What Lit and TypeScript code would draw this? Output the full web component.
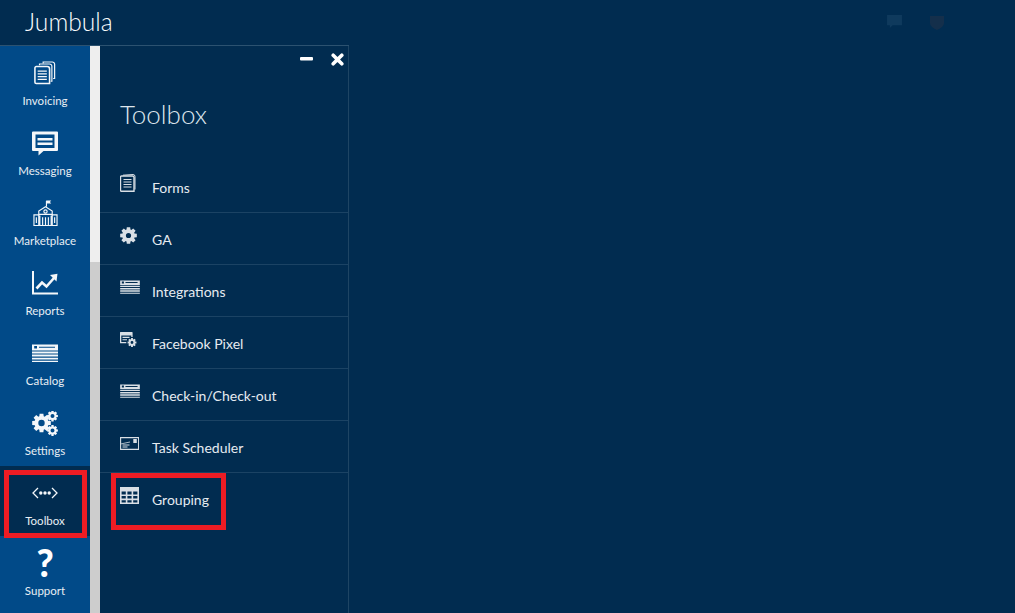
import { LitElement, html, css, svg } from "lit";
import { customElement } from "lit/decorators.js";

const gearPath = (cx: number, cy: number, r: number, hole: number) => {
  let d = "";
  const n = 8;
  for (let i = 0; i < n; i++) {
    const a = (i / n) * Math.PI * 2;
    const w = 0.2;
    const ro = r, ri = r * 0.74;
    const p = (ang: number, rad: number) => `${(cx + Math.cos(ang) * rad).toFixed(2)} ${(cy + Math.sin(ang) * rad).toFixed(2)}`;
    d += `${i === 0 ? "M" : "L"}${p(a - w - 0.12, ri)} L${p(a - w, ro)} L${p(a + w, ro)} L${p(a + w + 0.12, ri)} `;
  }
  d += `Z M${cx + hole} ${cy} A${hole} ${hole} 0 1 0 ${cx - hole} ${cy} A${hole} ${hole} 0 1 0 ${cx + hole} ${cy} Z`;
  return d;
};

const cardLines = svg`
  <path fill="currentColor" fill-rule="evenodd" d="M0 0.5h26v6H0zM2.2 2v2.6h2.8V2zM7 2.8v1h16v-1zM0 7.5h26v1.9H0zM0 10.6h26v1.9H0zM0 13.7h26v1.9H0zM0 16.7h26v1.5H0z"/>`;

const icons = {
  invoicing: svg`<svg viewBox="0 0 24 26" width="22" height="24" fill="none" stroke="currentColor">
    <path stroke-width="1.3" d="M10 2.5 V1 h10 a2.5 2.5 0 0 1 2.5 2.5 V19 h-1.6"/>
    <path stroke-width="1.3" d="M6 4.5 V3.2 h11 a2.5 2.5 0 0 1 2.5 2.5 V22 h-1.3"/>
    <path stroke-width="1.7" fill="#014a88" d="M2.5 6 h12 a2.5 2.5 0 0 1 2.5 2.5 V24.5 H2.5 a1.5 1.5 0 0 1-1.5-1.5 V7.5 a1.5 1.5 0 0 1 1.5-1.5z"/>
    <path stroke-width="1.5" d="M4 11h10M4 14h10M4 17h10M4 20h10"/></svg>`,
  messaging: svg`<svg viewBox="0 0 26 25" width="26" height="25">
    <path fill="currentColor" fill-rule="evenodd" d="M1 0.5h24a1 1 0 0 1 1 1V19a1 1 0 0 1-1 1H11.5l-5 4.6V20H1a1 1 0 0 1-1-1V1.5a1 1 0 0 1 1-1zM3.5 3.5V17h19V3.5zM5.5 7h15v2.6h-15zM5.5 11.5h15v2.6h-15z"/></svg>`,
  marketplace: svg`<svg viewBox="0 0 26 27" width="25" height="26" fill="none" stroke="currentColor" stroke-width="1.2">
    <path d="M14 7V0.8"/><path fill="currentColor" stroke="none" d="M14 0.6h5l-1.4 1.5L19 3.7h-5z"/>
    <path d="M13 7 L20 11.5 V15 H6 V11.5z"/><circle cx="13" cy="12" r="1.7"/>
    <path d="M1 15.5h5v11H1zM20 15.5h5v11h-5z"/><path stroke-width="1.4" d="M7 16v10.6h12V16"/>
    <path d="M3.5 18v6M22.5 18v6M10 18v8M13 18v8M16 18v8"/></svg>`,
  reports: svg`<svg viewBox="0 0 26 24" width="26" height="24" fill="none" stroke="currentColor">
    <path stroke-width="2" d="M1 0v22.5h25"/>
    <path stroke-width="2.6" d="M4.5 17.5 L10 11.5 L14.5 15.5 L22 7"/>
    <path fill="currentColor" stroke="none" d="M18 4 L25.5 2.8 L24.5 10.4z"/></svg>`,
  catalog: svg`<svg viewBox="0 0 26 18.5" width="26" height="18.5">${cardLines}</svg>`,
  settings: svg`<svg viewBox="0 0 26 25" width="26" height="25">
    <path fill="currentColor" fill-rule="evenodd" d="${gearPath(9.5, 12, 9.5, 3.2)}"/>
    <path fill="currentColor" fill-rule="evenodd" d="${gearPath(20.5, 5, 5.5, 2)}"/>
    <path fill="currentColor" fill-rule="evenodd" d="${gearPath(20.5, 19.5, 5.5, 2)}"/></svg>`,
  toolbox: svg`<svg viewBox="0 0 26 12" width="26" height="12">
    <path fill="none" stroke="currentColor" stroke-width="1.3" d="M6 1 L1 6 L6 11M20 1 L25 6 L20 11"/>
    <circle cx="8.8" cy="6" r="1.7" fill="currentColor"/><circle cx="13" cy="6" r="1.7" fill="currentColor"/><circle cx="17.2" cy="6" r="1.7" fill="currentColor"/></svg>`,
  forms: svg`<svg viewBox="0 0 16 18" width="16" height="18" fill="none" stroke="currentColor">
    <path stroke-width="1" d="M3 1.2 L13 0.5 a2 2 0 0 1 2 2 V15.5"/>
    <path stroke-width="1.4" d="M1.5 2h11a1.5 1.5 0 0 1 1.5 1.5V17.3H1.5a1 1 0 0 1-1-1V3a1 1 0 0 1 1-1z"/>
    <path stroke-width="1" d="M3.5 5.5h8M3.5 8h8M3.5 10.5h8M3.5 13h8"/></svg>`,
  ga: svg`<svg viewBox="0 0 17 17" width="17" height="17"><path fill="currentColor" fill-rule="evenodd" d="${gearPath(8.5, 8.5, 8.5, 2.6)}"/></svg>`,
  card: svg`<svg viewBox="0 0 26 18.5" width="20" height="14">${cardLines}</svg>`,
  pixel: svg`<svg viewBox="0 0 17 15" width="17" height="15">
    <path fill="currentColor" fill-rule="evenodd" d="M0.5 0h11.5a0.6 0.6 0 0 1 .6.6V5h-1.3V3.4H1.3V10h5v1.2H.5a.5.5 0 0 1-.5-.5V.5A.5.5 0 0 1 .5 0z"/>
    <path fill="currentColor" d="M2.5 4.8h7v1.1h-7zM2.5 7.2h4.5v1.1H2.5z"/>
    <path fill="currentColor" fill-rule="evenodd" d="${gearPath(12, 10.5, 4.5, 1.4)}"/></svg>`,
  task: svg`<svg viewBox="0 0 19 13" width="19" height="13" fill="none" stroke="currentColor">
    <path stroke-width="1.1" d="M.6.6h18v11.8H.6z"/>
    <path fill="currentColor" stroke="none" d="M2.5 7.5h7v1h-7zM2.5 9.5h5v1h-5zM13.3 2h3.5v4h-3.5z"/>
    <path stroke-width="0.8" d="M.6 7 L10 5"/></svg>`,
  grouping: svg`<svg viewBox="0 0 19 17" width="19" height="17">
    <path fill="currentColor" fill-rule="evenodd" d="M0 0h19v17H0zM1.6 4.6v2.8h4.2V4.6zM7.4 4.6v2.8h4.2V4.6zM13.2 4.6v2.8h4.2V4.6zM1.6 9v2.6h4.2V9zM7.4 9v2.6h4.2V9zM13.2 9v2.6h4.2V9zM1.6 13.2v2.3h4.2v-2.3zM7.4 13.2v2.3h4.2v-2.3zM13.2 13.2v2.3h4.2v-2.3z"/></svg>`,
};

const navItems = [
  { label: "Invoicing", icon: icons.invoicing, active: false },
  { label: "Messaging", icon: icons.messaging, active: false },
  { label: "Marketplace", icon: icons.marketplace, active: false },
  { label: "Reports", icon: icons.reports, active: false },
  { label: "Catalog", icon: icons.catalog, active: false },
  { label: "Settings", icon: icons.settings, active: false },
  { label: "Toolbox", icon: icons.toolbox, active: true },
  { label: "Support", icon: null, active: false },
];

const tools = [
  { label: "Forms", icon: icons.forms },
  { label: "GA", icon: icons.ga },
  { label: "Integrations", icon: icons.card },
  { label: "Facebook Pixel", icon: icons.pixel },
  { label: "Check-in/Check-out", icon: icons.card },
  { label: "Task Scheduler", icon: icons.task },
  { label: "Grouping", icon: icons.grouping },
];

@customElement("app-root")
export class AppRoot extends LitElement {
  static styles = css`
    :host {
      display: block;
      width: 1015px;
      height: 613px;
      overflow: hidden;
      background: #012c50;
      font-family: Lato, "Liberation Sans", sans-serif;
      color: #fff;
      position: relative;
    }
    .header {
      height: 45px;
      display: flex;
      align-items: center;
      padding: 0 0 3px 25px;
      box-sizing: border-box;
      position: relative;
    }
    .brand { font-size: 24.6px; font-weight: 300; color: #fbfcfd; }
    .hdr-icons { position: absolute; left: 887px; top: 15px; display: flex; gap: 28px; }
    .hdr-icons .chat { color: #0f3a5d; }
    .hdr-icons .shield { color: #142f4b; }
    .body { display: flex; height: 567px; border-top: 1px solid #2c5270; width: 349px; }
    .nav { width: 90px; background: #014a88; flex: none; overflow: hidden; }
    .nav-item {
      height: 70px;
      display: flex;
      flex-direction: column;
      align-items: center;
      color: #f4f7fa;
      box-sizing: border-box;
      padding-top: 11px;
    }
    .nav-item.active { background: #012c50; }
    .nav-icon { height: 32px; display: flex; align-items: center; justify-content: center; }
    .nav-label { font-size: 11.5px; line-height: 18px; margin-top: 3px; color: #e8eef4; }
    .q { font-size: 37px; font-weight: 900; line-height: 32px; color: #fff; }
    .scroll { width: 10px; flex: none; background: linear-gradient(#eeeeee 0, #eeeeee 216px, #cdcdcd 216px); }
    .panel { width: 249px; flex: none; border-right: 1px solid #1e4564; box-sizing: border-box; }
    .panel-tools { height: 26px; display: flex; justify-content: flex-end; align-items: center; gap: 18px; padding-right: 4px; }
    .title { font-size: 26px; font-weight: 300; margin: 26px 0 0 20px; line-height: 32px; color: #dde5ec; height: 63px; }
    .row {
      height: 52px;
      display: flex;
      align-items: center;
      padding: 1px 0 0 20px;
      border-bottom: 1px solid #1b4364;
      box-sizing: border-box;
      color: #e6ebf0;
    }
    .row:last-child { border-bottom: none; }
    .row-icon { width: 32px; height: 30px; flex: none; display: flex; align-items: center; margin-top: -8px; color: #d9dfe5; }
    .row-label { font-size: 14px; }
    .mark { position: absolute; border: 5px solid #ed1c24; box-sizing: border-box; }
    .mark.a { left: 4px; top: 470px; width: 83px; height: 68px; }
    .mark.b { left: 111px; top: 473px; width: 115px; height: 57px; }
  `;

  render() {
    return html`
      <div class="header">
        <span class="brand">Jumbula</span>
        <div class="hdr-icons">
          <svg class="chat" viewBox="0 0 16 15" width="15" height="14"><path fill="currentColor" d="M0 0h16v11H6l-3 3v-3H0z"/></svg>
          <svg class="shield" viewBox="0 0 14 15" width="14" height="15"><path fill="currentColor" d="M0 1h14v7q0 4-7 7q-7-3-7-7z"/></svg>
        </div>
      </div>
      <div class="body">
        <nav class="nav">
          ${navItems.map(
            (n) => html`<div class="nav-item ${n.active ? "active" : ""}">
              <div class="nav-icon">${n.icon ?? html`<span class="q">?</span>`}</div>
              <div class="nav-label">${n.label}</div>
            </div>`
          )}
        </nav>
        <div class="scroll"></div>
        <section class="panel">
          <div class="panel-tools">
            <svg viewBox="0 0 13 4" width="13" height="4"><rect width="13" height="3.4" rx="1" fill="#fff"/></svg>
            <svg viewBox="0 0 13 13" width="13" height="13"><path stroke="#fff" stroke-width="3.6" stroke-linecap="round" d="M2.2 2.2l8.6 8.6M10.8 2.2l-8.6 8.6"/></svg>
          </div>
          <div class="title">Toolbox</div>
          ${tools.map(
            (t) => html`<div class="row">
              <div class="row-icon">${t.icon}</div>
              <div class="row-label">${t.label}</div>
            </div>`
          )}
        </section>
      </div>
      <div class="mark a"></div>
      <div class="mark b"></div>
    `;
  }
}
